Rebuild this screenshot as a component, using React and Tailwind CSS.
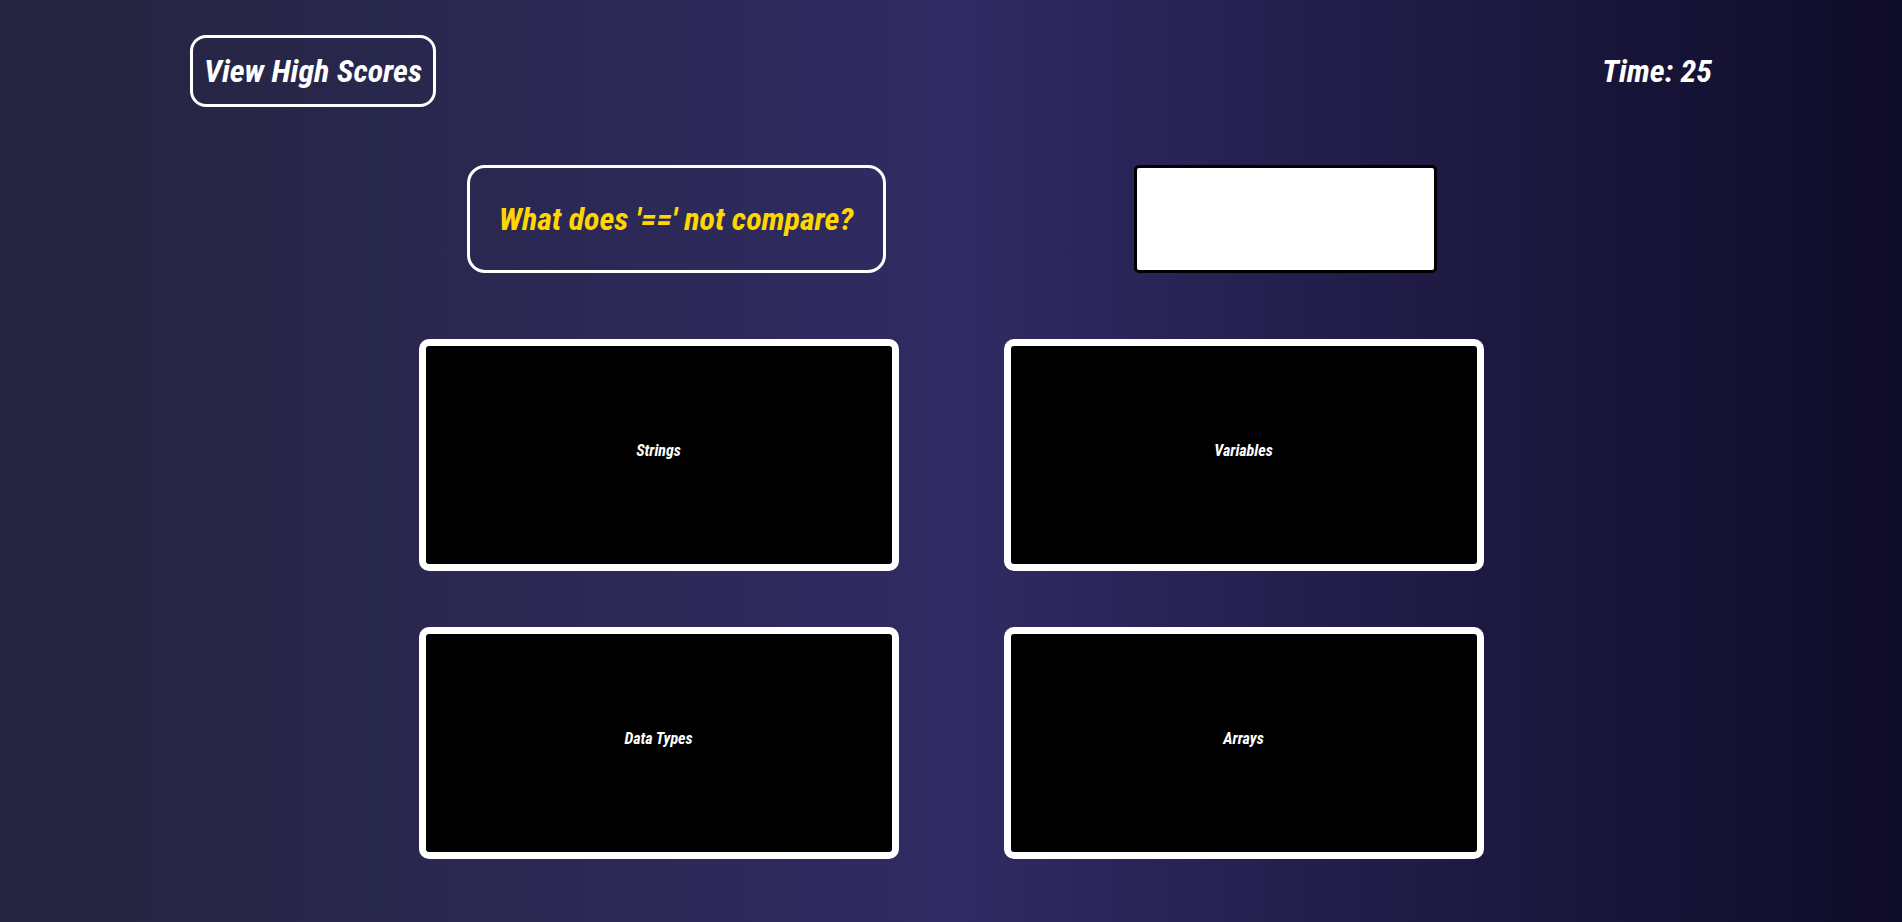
import React from 'react';

// font stack: Roboto Condensed if installed, otherwise plain Roboto
const font = "font-['Roboto_Condensed','Roboto',sans-serif]";

const answers = ['Strings', 'Variables', 'Data Types', 'Arrays'];

// one answer tile
const AnswerCard = ({ label }) => (
  <button className="h-[232px] w-[480px] bg-black border-[7px] border-white rounded-[10px] flex items-center justify-center pb-[8px]">
    <span className="text-white text-[16px] font-bold italic">{label}</span>
  </button>
);

const App = () => {
  return (
    <div
      className={`${font} min-h-[922px] w-full bg-linear-to-r from-[#24243e] via-[#302b63] to-[#0f0c29] pt-[35px]`}
    >
      {/* header */}
      <div className="flex items-center justify-between px-[190px]">
        <button className="h-[72px] w-[246px] border-[3px] border-white rounded-[16px] text-white text-[32px] font-bold italic leading-none">
          View High Scores
        </button>
        <div className="text-white text-[32px] font-bold italic leading-none">
          Time: 25
        </div>
      </div>

      {/* question + answer field */}
      <div className="mx-auto w-[1065px] mt-[58px] flex">
        <div className="ml-[48px] h-[108px] w-[419px] border-[3px] border-white rounded-[18px] flex items-center justify-center">
          <span className="text-[#ffd700] text-[32px] font-bold italic">
            What does '==' not compare?
          </span>
        </div>
        <div className="ml-[248px] h-[108px] w-[303px] bg-white border-[3px] border-black rounded-[5px]" />
      </div>

      {/* answer grid */}
      <div className="mx-auto mt-[66px] w-[1065px] grid grid-cols-[480px_480px] gap-x-[105px] gap-y-[56px]">
        {answers.map((a) => (
          <AnswerCard key={a} label={a} />
        ))}
      </div>
    </div>
  );
};

export default App;
